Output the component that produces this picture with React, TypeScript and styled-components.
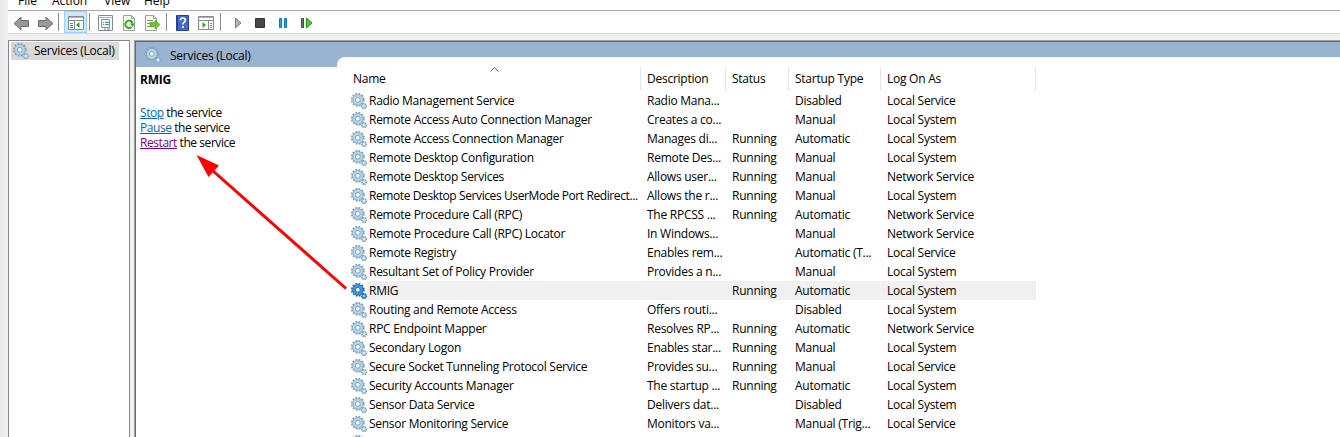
import React from "react";
import styled, { createGlobalStyle, css } from "styled-components";

const Global = createGlobalStyle`
  * { box-sizing: border-box; }
  html, body { margin: 0; height: 100%; overflow: hidden; background: #f0f0f0; }
  body { font: 12px/15px "Open Sans", "Noto Sans", sans-serif; letter-spacing: -0.25px; color: #000; }
  svg { display: block; flex: none; }
`;
const Screen = styled.div`
  position: relative;
  width: 1340px;
  height: 437px;
  overflow: hidden;
  display: flex;
`;
const Edge = styled.div`
  width: 8px;
  flex: none;
  background: linear-gradient(90deg, #e9e9e9, #f0f0f0);
`;
const Window = styled.div`
  flex: 1;
  min-width: 0;
  display: flex;
  flex-direction: column;
`;
const MenuBar = styled.div`
  height: 11px;
  flex: none;
  display: flex;
  align-items: flex-end;
  padding: 0 0 2px 10px;
  background: #fff;
  border-bottom: 1px solid #a8a8a8;
`;
const MenuItem = styled.span<{ $w: number }>`
  width: ${(p) => p.$w}px;
  letter-spacing: 0;
`;
const Toolbar = styled.div`
  height: 23px;
  flex: none;
  display: flex;
  align-items: center;
  background: #fff;
  border-bottom: 1px solid #dadada;
`;
const Tool = styled.div<{ $w: number; $active?: boolean }>`
  width: ${(p) => p.$w}px;
  height: 22px;
  display: flex;
  align-items: center;
  justify-content: center;
  padding-top: 2px;
  ${(p) => p.$active && css`background: #cce8ff; border: 1px solid #99d1ff;`}
`;
const Divider = styled.div<{ $l: number; $r: number }>`
  width: 1px;
  height: 18px;
  background: #8c8c8c;
  margin: 0 ${(p) => p.$r}px 0 ${(p) => p.$l}px;
`;
const Body = styled.div`
  flex: 1;
  min-height: 0;
  display: flex;
  gap: 4px;
  padding-top: 6px;
`;
const Tree = styled.div`
  width: 122px;
  flex: none;
  background: #fff;
  border: 1px solid #828790;
  border-bottom: 0;
  padding: 1px 0 0 2px;
`;
const TreeNode = styled.div`
  width: 108px;
  height: 18px;
  display: flex;
  align-items: center;
  gap: 5px;
  padding: 0 0 1px 2px;
  background: #d9d9d9;
  white-space: nowrap;
`;
const Pane = styled.div`
  flex: 1;
  min-width: 0;
  display: flex;
  background: #9ab3d0;
  border: solid #a09f9a;
  border-width: 1px 0 0 1px;
  box-shadow: inset 1px 1px #696969;
  padding: 1px 0 0 1px;
`;
const Side = styled.div`
  width: 201px;
  flex: none;
  display: flex;
  flex-direction: column;
`;
const SideTitle = styled.div`
  height: 25px;
  flex: none;
  display: flex;
  align-items: center;
  gap: 9px;
  padding: 1px 0 0 9px;
`;
const SideBody = styled.div`
  flex: 1;
  background: #fff;
  padding: 5px 0 0 4px;
`;
const Heading = styled.div`
  font-weight: 700;
  height: 33px;
`;
const Action = styled.div`
  letter-spacing: -0.44px;
`;
const Link = styled.a<{ $visited?: boolean }>`
  color: ${(p) => (p.$visited ? "#800080" : "#0066cc")};
  text-decoration: underline;
  text-underline-offset: 1px;
`;
const List = styled.div`
  flex: 1;
  min-width: 0;
  margin-top: 15px;
  padding: 10px 0 0 14px;
  background: #fff;
  border-top-left-radius: 8px;
`;
const columns = "289px 85px 63px 92px 156px";
const Head = styled.div`
  position: relative;
  display: grid;
  grid-template-columns: ${columns};
  width: 685px;
  height: 24px;
`;
const HeadCell = styled.div`
  border-left: 1px solid #e5e5e5;
  padding: 4px 0 0 6px;
  white-space: nowrap;
  &:first-child { padding-left: 2px; border-left: 0; }
  &:nth-child(5) { border-right: 1px solid #e5e5e5; }
`;
const SortMark = styled.svg`
  position: absolute;
  left: 139px;
  top: 0;
`;
const Row = styled.div<{ $on?: boolean }>`
  display: grid;
  grid-template-columns: ${columns};
  width: 685px;
  height: 19px;
  background: ${(p) => (p.$on ? "linear-gradient(90deg, #fff 16px, #f0f0f0 16px)" : "transparent")};
`;
const Cell = styled.div`
  padding: 2px 0 0 7px;
  white-space: nowrap;
`;
const NameCell = styled.div<{ $tight?: boolean }>`
  display: flex;
  align-items: center;
  gap: 2px;
  white-space: nowrap;
  letter-spacing: ${(p) => (p.$tight ? "-0.4px" : "-0.28px")};
`;
const Overlay = styled.svg`
  position: absolute;
  left: 0;
  top: 0;
  pointer-events: none;
`;

function Gear({ dark }: { dark?: boolean }) {
  const edge = dark ? "#1b68ad" : "#7d9db5";
  const fill = dark ? "#4595d3" : "#b4d6ea";
  return (
    <svg width="16" height="16" viewBox="0 0 16 16">
      <circle cx="6.8" cy="6.800" r="6" fill="none" stroke={edge} strokeWidth="1.800" strokeDasharray="1.85 1.29" />
      <circle cx="6.800" cy="6.800" r="4" fill="#fff" stroke={fill} strokeWidth="3" />
      <circle cx="6.800" cy="6.800" r="5.300" fill="none" stroke={edge} strokeWidth=".6" />
      <circle cx="6.800" cy="6.800" r="2.400" fill="none" stroke={edge} strokeWidth="1" />
      <circle cx="13" cy="13" r="1.700" fill="#fff" stroke={fill} strokeWidth="1.700" />
      <circle cx="13" cy="13" r="2.400" fill="none" stroke={edge} strokeWidth="1.400" strokeDasharray="1.100 .78" />
    </svg>
  );
}
function Arrow({ flip }: { flip?: boolean }) {
  return (
    <svg width="17" height="15" viewBox="0 0 17 15">
      <path transform={flip ? "translate(17 0) scale(-1 1)" : undefined} d="M1 7.500 8 1.200v3.300h7.500v6H8v3.300Z" fill="#999" stroke="#6c6c6c" />
    </svg>
  );
}
function Sheet() {
  return (
    <>
      <path d="M1.500.5h8l3 3v12h-11Z" fill="#fffbe9" stroke="#a1a1a1" />
      <path d="M9.500.5v3h3" fill="none" stroke="#a1a1a1" />
    </>
  );
}

const services: [string, string, string, string, string][] = [
  ["Radio Management Service", "Radio Mana...", "", "Disabled", "Local Service"],
  ["Remote Access Auto Connection Manager", "Creates a co...", "", "Manual", "Local System"],
  ["Remote Access Connection Manager", "Manages di...", "Running", "Automatic", "Local System"],
  ["Remote Desktop Configuration", "Remote Des...", "Running", "Manual", "Local System"],
  ["Remote Desktop Services", "Allows user...", "Running", "Manual", "Network Service"],
  ["Remote Desktop Services UserMode Port Redirect...", "Allows the r...", "Running", "Manual", "Local System"],
  ["Remote Procedure Call (RPC)", "The RPCSS ...", "Running", "Automatic", "Network Service"],
  ["Remote Procedure Call (RPC) Locator", "In Windows...", "", "Manual", "Network Service"],
  ["Remote Registry", "Enables rem...", "", "Automatic (T...", "Local Service"],
  ["Resultant Set of Policy Provider", "Provides a n...", "", "Manual", "Local System"],
  ["RMIG", "", "Running", "Automatic", "Local System"],
  ["Routing and Remote Access", "Offers routi...", "", "Disabled", "Local System"],
  ["RPC Endpoint Mapper", "Resolves RP...", "Running", "Automatic", "Network Service"],
  ["Secondary Logon", "Enables star...", "Running", "Manual", "Local System"],
  ["Secure Socket Tunneling Protocol Service", "Provides su...", "Running", "Manual", "Local Service"],
  ["Security Accounts Manager", "The startup ...", "Running", "Automatic", "Local System"],
  ["Sensor Data Service", "Delivers dat...", "", "Disabled", "Local System"],
  ["Sensor Monitoring Service", "Monitors va...", "", "Manual (Trig...", "Local Service"],
  ["", "", "", "", ""],
];

export default function App() {
  return (
    <Screen>
      <Global />
      <Edge />
      <Window>
        <MenuBar>
          <MenuItem $w={34}>File</MenuItem>
          <MenuItem $w={52}>Action</MenuItem>
          <MenuItem $w={40}>View</MenuItem>
          <MenuItem $w={30}>Help</MenuItem>
        </MenuBar>
        <Toolbar>
          <Tool $w={26}><Arrow /></Tool>
          <Tool $w={22}><Arrow flip /></Tool>
          <Divider $l={2} $r={5} />
          <Tool $w={23} $active>
            <svg width="16" height="14" viewBox="0 0 16 14">
              <path d="M.5.5h15v13H.5Z" fill="#fff" stroke="#858b92" />
              <path d="M1 1.500h14" stroke="#a9afb5" />
              <path d="M1 4.500h14M6.500 5v9" stroke="#858b92" />
              <path d="M2 7.500h3M2 9.500h3M2 11.500h3" stroke="#5288b8" />
              <path d="M11.500 6v6L8 9Z" fill="#2eaa16" />
            </svg>
          </Tool>
          <Divider $l={2} $r={4} />
          <Tool $w={23}>
            <svg width="15" height="16" viewBox="0 0 15 16">
              <path d="M.5.5h14v15H.5Z" fill="#fff" stroke="#858b92" />
              <path d="M1 2.500h13" stroke="#b0b6bc" />
              <path d="M3.500 4.500h8v8h-8Z" fill="#eef5fb" stroke="#8798a8" />
              <path d="M5 7.500h1M7 7.500h4M5 9.500h1M7 9.500h4M6 14h2M9 14h3" stroke="#5288b8" />
            </svg>
          </Tool>
          <Tool $w={24}>
            <svg width="14" height="16" viewBox="0 0 14 16">
              <Sheet />
              <path d="M9.500 12A3.700 3.700 0 1 1 10.600 8.500" fill="none" stroke="#32a92a" strokeWidth="2" />
              <path d="M8 8.500h5L10.500 12Z" fill="#32a92a" />
            </svg>
          </Tool>
          <Tool $w={22}>
            <svg width="17" height="16" viewBox="0 0 17 16">
              <Sheet />
              <path d="M3 5.500h6M3 8.500h3M3 11.500h6" stroke="#889" />
              <path d="M6 7.500h5V5l5 4.500-5 4.500v-2.500H6Z" fill="#65c72c" stroke="#47a51b" strokeWidth=".6" />
            </svg>
          </Tool>
          <Divider $l={3} $r={4} />
          <Tool $w={23}>
            <svg width="13" height="16" viewBox="0 0 13 16">
              <path d="M.5.5h12v15H.5Z" fill="#4667cb" stroke="#27438f" />
              <path d="M1.500 1v14" stroke="#24428e" />
              <path d="M4.500 5.300q0-2.300 2.400-2.300t2.400 2q0 1.500-1.200 2.200T7 9.500M7 11v2" fill="none" stroke="#fff" strokeWidth="1.700" />
            </svg>
          </Tool>
          <Tool $w={24}>
            <svg width="16" height="14" viewBox="0 0 16 14">
              <path d="M.5.5h15v13H.5Z" fill="#fff" stroke="#858b92" />
              <path d="M1 1.500h14" stroke="#a9afb5" />
              <path d="M1 4.500h14M10.500 5v9" stroke="#858b92" />
              <path d="M12 7.500h2M12 9.500h2M12 11.500h2" stroke="#5288b8" />
              <path d="M4.500 6v6L8 9Z" fill="#2eaa16" />
            </svg>
          </Tool>
          <Divider $l={2} $r={7} />
          <Tool $w={21}>
            <svg width="7" height="12" viewBox="0 0 7 12"><path d="M.5 1v10l5.500-5Z" fill="#b0b0b0" stroke="#808080" /></svg>
          </Tool>
          <Tool $w={22}>
            <svg width="10" height="10" viewBox="0 0 10 10"><path d="M.5.5h9v9h-9Z" fill="#484848" stroke="#333" /></svg>
          </Tool>
          <Tool $w={24}>
            <svg width="8" height="10" viewBox="0 0 8 10"><path d="M.5.5h2v9h-2ZM5.500.5h2v9h-2Z" fill="#1ca3ec" stroke="#0c7abf" /></svg>
          </Tool>
          <Tool $w={23}>
            <svg width="12" height="12" viewBox="0 0 12 12">
              <path d="M.5 1.500h2v9h-2Z" fill="#777" stroke="#444" />
              <path d="M5.500 1v10l5.500-5Z" fill="#45cf26" stroke="#229b0e" />
            </svg>
          </Tool>
        </Toolbar>
        <Body>
          <Tree>
            <TreeNode><Gear />Services (Local)</TreeNode>
          </Tree>
          <Pane>
            <Side>
              <SideTitle><Gear />Services (Local)</SideTitle>
              <SideBody>
                <Heading>RMIG</Heading>
                <Action><Link>Stop</Link> the service</Action>
                <Action><Link>Pause</Link> the service</Action>
                <Action><Link $visited>Restart</Link> the service</Action>
              </SideBody>
            </Side>
            <List>
              <Head>
                <HeadCell>Name</HeadCell>
                <HeadCell>Description</HeadCell>
                <HeadCell>Status</HeadCell>
                <HeadCell>Startup Type</HeadCell>
                <HeadCell>Log On As</HeadCell>
                <SortMark width="9" height="5" viewBox="0 0 9 5"><path d="M.5 4.500l4-4 4 4" fill="none" stroke="#666" /></SortMark>
              </Head>
              {services.map(([name, ...rest], i) => (
                <Row key={i} $on={name === "RMIG"}>
                  <NameCell $tight={name.length > 42}><Gear dark={name === "RMIG"} />{name}</NameCell>
                  {rest.map((text, j) => <Cell key={j}>{text}</Cell>)}
                </Row>
              ))}
            </List>
          </Pane>
        </Body>
      </Window>
      <Overlay width="1340" height="437" viewBox="0 0 1340 437">
        <path d="M346 288.500 212 170" stroke="#f00" strokeWidth="3" />
        <path d="M196.500 155 219 165.500 208.500 177Z" fill="#f00" />
      </Overlay>
    </Screen>
  );
}
